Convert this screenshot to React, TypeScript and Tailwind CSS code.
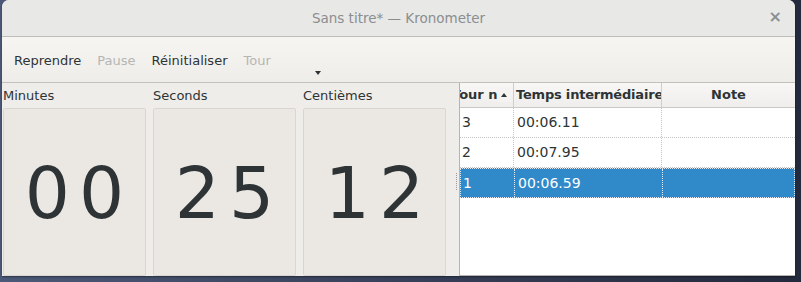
import React from "react";

const font = { fontFamily: '"DejaVu Sans", "Liberation Sans", sans-serif' };

function DigitBox({ label, value }: { label: string; value: string }) {
  return (
    <div className="flex flex-col w-[143px]">
      <div className="h-[25px] flex items-center text-[13px] text-[#2e3436] leading-none">{label}</div>
      <div className="flex-1 bg-[#ebe8e4] border border-[#d9d6d1] rounded-[2px] flex items-center justify-center">
        <span className="text-[71px] leading-none text-[#2e3436] tracking-[9px] pl-[9px] mt-[2px]">{value}</span>
      </div>
    </div>
  );
}

const rows = [
  { n: "3", t: "00:06.11", sel: false },
  { n: "2", t: "00:07.95", sel: false },
  { n: "1", t: "00:06.59", sel: true },
];

export default function App() {
  return (
    <div
      className="w-[801px] h-[282px] overflow-hidden bg-gradient-to-r from-[#4b5877] to-[#242a3d] pl-[2px]"
      style={font}
    >
      <div className="w-[793px] h-[276px] flex flex-col rounded-t-[7px] overflow-hidden bg-[#efede9] shadow-[0_1px_2px_rgba(0,0,0,0.4)]">
        {/* title bar */}
        <div className="h-[37px] shrink-0 bg-[#e8e8e7] border-b border-[#bdbdbc] relative flex items-center justify-center">
          <span className="text-[13.5px] text-[#8b8e8f]">Sans titre* — Kronometer</span>
          <span className="absolute right-[13px] top-[9px] text-[16px] text-[#8b8e8f] leading-none font-bold">×</span>
        </div>
        {/* toolbar */}
        <div className="h-[46px] shrink-0 bg-gradient-to-b from-[#f7f5f1] to-[#efede9] border-b border-[#c3c1bd] relative flex items-center pl-[12px] gap-[16px] text-[13px] pt-[2px]">
          <span className="text-[#2e3436]">Reprendre</span>
          <span className="text-[#b5b6b3]">Pause</span>
          <span className="text-[#2e3436]">Réinitialiser</span>
          <span className="text-[#b5b6b3]">Tour</span>
          <div className="absolute left-[313px] top-[34px] w-0 h-0 border-l-[3px] border-r-[3px] border-t-[4px] border-l-transparent border-r-transparent border-t-[#2e3436]"></div>
        </div>
        {/* body */}
        <div className="flex-1 flex min-h-0">
          <div className="w-[457px] shrink-0 flex gap-[7px] pl-[1px] relative">
            <DigitBox label="Minutes" value="00" />
            <DigitBox label="Seconds" value="25" />
            <DigitBox label="Centièmes" value="12" />
            <div className="absolute left-[454px] top-[90px] w-[1px] h-[17px] border-l border-dotted border-[#9a9a9a]"></div>
          </div>
          <div className="flex-1 bg-white border-l border-b border-[#b5b4b0] flex flex-col">
            {/* header */}
            <div className="h-[25px] shrink-0 flex bg-gradient-to-b from-[#f8f7f5] to-[#efeeec] border-b border-[#c9c8c5] text-[13px] font-bold text-[#2e3436]">
              <div className="w-[54px] shrink-0 border-r border-[#cfcecb] flex items-center overflow-hidden relative">
                <span className="ml-[-8px] whitespace-nowrap">Tour n</span>
                <span className="absolute left-[37px] top-[5px] w-[14px] h-[14px] bg-[#f4f3f1] flex items-center justify-center">
                  <span className="w-0 h-0 border-l-[3.5px] border-r-[3.5px] border-b-[4px] border-l-transparent border-r-transparent border-b-[#2e3436]"></span>
                </span>
              </div>
              <div className="w-[148px] shrink-0 border-r border-[#cfcecb] flex items-center pl-[2px] whitespace-nowrap overflow-hidden tracking-[-0.2px]">Temps intermédiaire</div>
              <div className="flex-1 flex items-center justify-center">Note</div>
            </div>
            {rows.map((r) => (
              <div
                key={r.n}
                className={`h-[30px] shrink-0 flex text-[14px] ${r.sel ? "bg-[#3089c9] text-white border border-dotted border-[#dfe9f3]" : "text-[#2e3436] border-b border-dotted border-[#c4c4c4]"}`}
              >
                <div className={`w-[54px] shrink-0 flex items-center pl-[2px] border-r border-dotted ${r.sel ? "border-[#e3ecf5]" : "border-[#c4c4c4]"}`}>{r.n}</div>
                <div className={`w-[148px] shrink-0 flex items-center pl-[3px] border-r border-dotted ${r.sel ? "border-[#e3ecf5]" : "border-[#c4c4c4]"}`}>{r.t}</div>
                <div className="flex-1"></div>
              </div>
            ))}
          </div>
        </div>
      </div>
    </div>
  );
}
